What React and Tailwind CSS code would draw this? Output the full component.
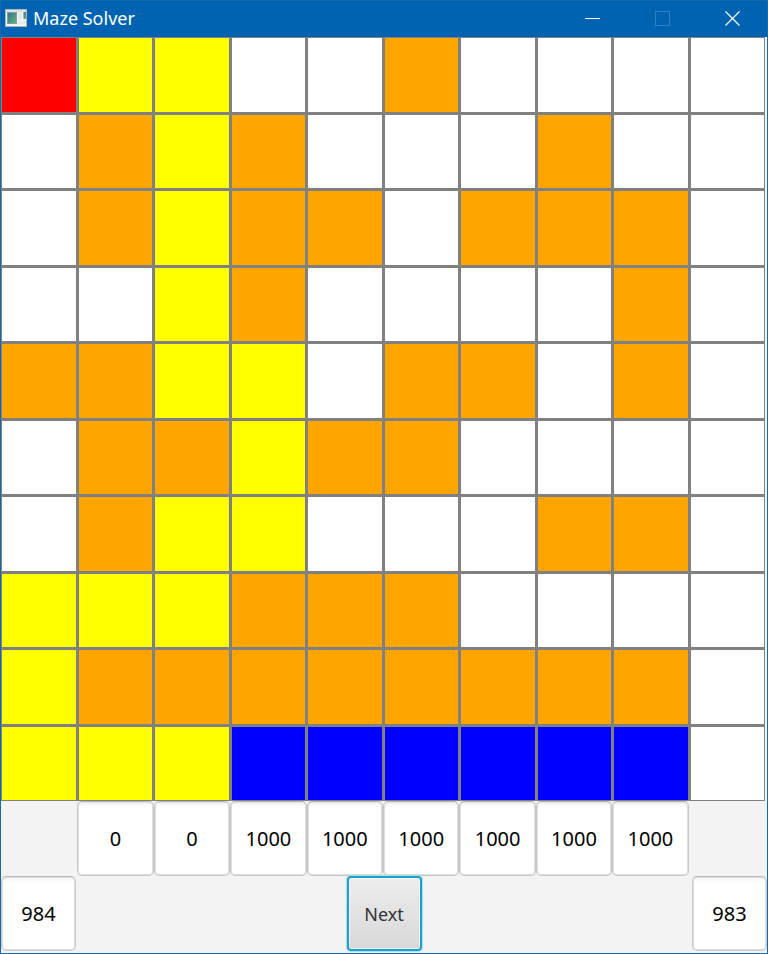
import { useState } from "react";

// S start, P path, W wall, G goal strip, "." open
const MAZE = [
  "SPP..W....",
  ".WPW...W..",
  ".WPWW.WWW.",
  "..PW....W.",
  "WWPP.WW.W.",
  ".WWPWW....",
  ".WPP...WW.",
  "PPPWWW....",
  "PWWWWWWWW.",
  "PPPGGGGGG.",
];

const FILL = {
  S: "bg-[#ff0000]",
  P: "bg-[#ffff00]",
  W: "bg-[#ffa500]",
  G: "bg-[#0000ff]",
  ".": "bg-white",
};

const VALUES = ["0", "0", "1000", "1000", "1000", "1000", "1000", "1000"];

function Field({ label, initial, className }) {
  const [value, setValue] = useState(initial);
  return (
    <input
      type="text"
      aria-label={label}
      value={value}
      onChange={(e) => setValue(e.target.value)}
      className={
        "min-w-0 rounded-[5px] border border-[#c8c8c8] border-t-[#b8b8b8] bg-white bg-linear-to-b from-[#f3f3f3] to-white to-[6px] text-center text-xl text-black shadow-[inset_0_0_0_1px_#dedede] outline-none " +
        className
      }
    />
  );
}

function TitleBar() {
  return (
    <header className="flex h-9 items-center bg-[#0063b1] pb-0.5 pl-1 text-white">
      <svg width="22" height="18" viewBox="0 0 22 18" aria-hidden="true">
        <defs>
          <linearGradient id="pane" x1="0" y1="0" x2="1" y2="1">
            <stop offset="0" stopColor="#3c6c96" />
            <stop offset="1" stopColor="#5fb878" />
          </linearGradient>
        </defs>
        <rect x="0.5" y="0.5" width="21" height="17" fill="#f4f4f4" stroke="#a9b4bc" />
        <rect x="1" y="1" width="20" height="2" fill="#dde3e8" />
        <rect x="2.5" y="3.5" width="9" height="11" fill="url(#pane)" stroke="#75a39b" />
        <rect x="13" y="3" width="4" height="8" fill="#e6e8ea" />
        <rect x="18.5" y="3" width="2.5" height="7" fill="url(#pane)" />
        <rect x="13" y="12" width="8" height="3" fill="#e9eaeb" />
      </svg>
      <h1 className="ml-1.5 flex-1 text-lg">Maze Solver</h1>
      <div className="flex h-full">
        <button aria-label="Minimize" className="flex w-[70px] items-center justify-center">
          <svg width="15" height="15" viewBox="0 0 15 15">
            <path d="M0 7.5H15" stroke="white" />
          </svg>
        </button>
        <button aria-label="Maximize" disabled className="flex w-[70px] items-center justify-center">
          <svg width="15" height="15" viewBox="0 0 15 15">
            <rect x="0.5" y="0.5" width="14" height="14" fill="none" stroke="#2d83c8" />
          </svg>
        </button>
        <button aria-label="Close" className="flex w-[70px] items-center justify-center">
          <svg width="15" height="15" viewBox="0 0 15 15">
            <path d="M0.5 0.5L14.5 14.5M14.5 0.5L0.5 14.5" stroke="white" strokeWidth="1.2" />
          </svg>
        </button>
      </div>
    </header>
  );
}

export default function App() {
  return (
    <div className="border border-[#1769ae] bg-[#f3f3f3] font-['Noto_Sans','Open_Sans',sans-serif]">
      <TitleBar />
      <main className="pb-0.5">
        <div className="mr-0.5 grid aspect-square grid-cols-10 grid-rows-10 gap-[3px] bg-[#808080] p-px">
          {MAZE.join("")
            .split("")
            .map((cell, i) => (
              <div key={i} className={FILL[cell]} />
            ))}
        </div>
        <div className="mr-0.5 grid h-[75px] grid-cols-10">
          {VALUES.map((v, i) => (
            <Field
              key={i}
              label={"Column " + (i + 1)}
              initial={v}
              className={i === 0 ? "col-start-2" : ""}
            />
          ))}
        </div>
        <div className="flex h-[75px] justify-between">
          <Field label="Left total" initial="984" className="w-[75px]" />
          <button className="w-[75px] rounded-[4px] border-2 border-[#1ba1cf] bg-linear-to-b from-[#ededed] to-[#d8d8d8] text-lg text-[#333333] shadow-[inset_0_0_0_1px_#f4f4f4,0_0_1px_1px_#a8dcee]">
            Next
          </button>
          <Field label="Right total" initial="983" className="w-[75px]" />
        </div>
      </main>
    </div>
  );
}
